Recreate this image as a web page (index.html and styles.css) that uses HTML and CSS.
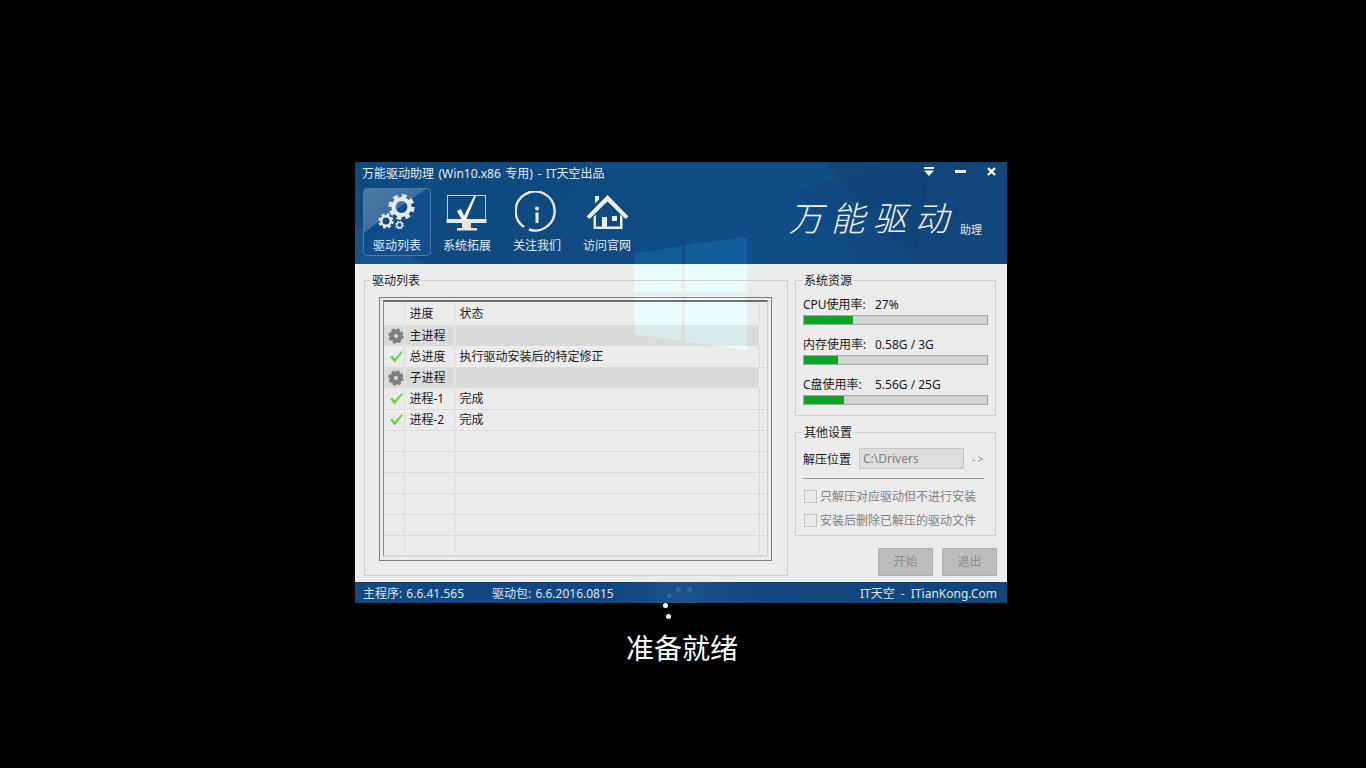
FILE: index.html
```html
<!DOCTYPE html>
<html lang="zh-CN">
<head>
  <meta charset="UTF-8" />
  <title>万能驱动助理</title>
  <link rel="stylesheet" href="styles.css">
</head>
<body>
  <svg class="defs" width="0" height="0">
    <defs>
      <symbol id="gear" viewBox="0 0 32 32">
        <circle cx="16" cy="16" r="9.5" fill="none" stroke="currentColor" stroke-width="5"/>
        <circle cx="16" cy="16" r="12.5" fill="none" stroke="currentColor" stroke-width="6" stroke-dasharray="5.3 4.52"/>
      </symbol>
      <symbol id="gear-solid" viewBox="0 0 32 32">
        <circle cx="16" cy="16" r="8.5" fill="none" stroke="currentColor" stroke-width="9"/>
        <circle cx="16" cy="16" r="12.5" fill="none" stroke="currentColor" stroke-width="6" stroke-dasharray="5.3 4.52"/>
      </symbol>
      <symbol id="tick" viewBox="0 0 16 14">
        <path d="M1 7.5 L3.4 6 L6.2 9 L13.6 1 L15 2.2 L6.6 13 L5.4 13 Z" fill="#7bcf4a"/>
      </symbol>
    </defs>
  </svg>

  <div class="window">
    <div class="header">
      <svg class="shards" width="652" height="102">
        <polygon points="0,0 240,0 150,102 0,102" fill="#0e4a80"/>
        <polygon points="230,0 470,0 560,102 360,102" fill="#15538c" opacity=".45"/>
        <polygon points="470,0 652,0 652,102 560,102" fill="#10467c"/>
        <polygon points="530,0 575,0 560,102 505,102 440,30" fill="#0d4274" opacity=".3"/>
        <polygon points="0,62 70,102 0,102" fill="#1a5c97" opacity=".6"/>
      </svg>
    </div>
    <div class="content"></div>
    <svg class="win-logo" width="652" height="441">
      <polygon class="pane-top" points="279,91 327,84 327,102 279,102"/>
      <polygon class="pane-top" points="330,83 392,75 392,102 330,102"/>
      <polygon class="pane" points="279,102 327,102 327,130 279,130"/>
      <polygon class="pane" points="330,102 392,102 392,130 330,130"/>
      <polygon class="pane" points="279,134 327,134 327,179 279,172"/>
      <polygon class="pane" points="330,134 392,134 392,188 330,180"/>
    </svg>

    <div class="layer">
      <div class="titlebar">
        <span class="title">万能驱动助理 (Win10.x86 专用) - IT天空出品</span>
        <div class="win-btns">
          <svg width="10" height="9" viewBox="0 0 10 9"><rect width="10" height="2" fill="#fff"/><path d="M0 3.5 H10 L5 9 Z" fill="#fff"/></svg>
          <svg width="11" height="3" viewBox="0 0 11 3"><rect width="11" height="3" fill="#fff"/></svg>
          <svg width="9" height="9" viewBox="0 0 9 9"><path d="M1 1 L8 8 M8 1 L1 8" stroke="#fff" stroke-width="2.4"/></svg>
        </div>
      </div>

      <div class="toolbar">
        <div class="tabs">
          <div class="tab active">
            <svg class="tab-icon" width="54" height="44" viewBox="0 0 54 44">
              <use href="#gear" x="18" y="2.5" width="27" height="27"/>
              <use href="#gear" x="8" y="22" width="16" height="16"/>
              <use href="#gear" x="25" y="29.5" width="9" height="9"/>
            </svg>
            <span>驱动列表</span>
          </div>
          <div class="tab">
            <svg class="tab-icon" width="44" height="44" viewBox="0 0 44 44">
              <rect x="2.5" y="4.5" width="38" height="24" fill="none" stroke="#c4d0dc" stroke-width="1"/>
              <rect x="1.5" y="28" width="40" height="4" fill="#e6e6e6"/>
              <rect x="17" y="32" width="9" height="5" fill="#e6e6e6"/>
              <rect x="12" y="37" width="20" height="2.5" fill="#e6e6e6"/>
              <path d="M12 20 L16 18 L19 25 L29 5 L31 5 L21 29 L17 29 Z" fill="#fff"/>
            </svg>
            <span>系统拓展</span>
          </div>
          <div class="tab">
            <svg class="tab-icon" width="44" height="44" viewBox="0 0 44 44">
              <path d="M9 36 A19.5 19.5 0 1 1 14 38.5" fill="none" stroke="#e8e8e8" stroke-width="2.4"/>
              <circle cx="22" cy="17.5" r="2" fill="#e8e8e8"/>
              <rect x="20.5" y="21.5" width="3" height="10.5" fill="#e8e8e8"/>
            </svg>
            <span>关注我们</span>
          </div>
          <div class="tab">
            <svg class="tab-icon" width="44" height="44" viewBox="0 0 44 44">
              <path d="M1.5 25.5 L22.5 4 L43.5 25.5 L40.5 28 L22.5 10.5 L4.5 28 Z" fill="#eee"/>
              <path d="M10 5 H14 V8.5 L10 12.5 Z" fill="#eee"/>
              <path d="M8.5 26 V38 H37.5 V26 L35 23.5 V35.5 H11 V23.5 Z" fill="#eee"/>
              <rect x="17" y="26" width="5" height="11" fill="#eee"/>
              <rect x="27" y="25" width="5" height="5" fill="#eee"/>
            </svg>
            <span>访问官网</span>
          </div>
        </div>
        <div class="brand">
          <span class="brand-name">万能驱动</span>
          <span class="brand-sub">助理</span>
        </div>
      </div>

      <div class="main">
        <fieldset class="group list-group">
          <legend>驱动列表</legend>
          <div class="frame">
            <div class="frame-inner">
              <table class="list">
                <colgroup><col class="c1"><col class="c2"><col class="c3"><col></colgroup>
                <tr class="head"><td></td><td>进度</td><td>状态</td><td></td></tr>
                <tr class="shade"><td><svg class="gear-ic"><use href="#gear-solid"/></svg></td><td>主进程</td><td></td><td></td></tr>
                <tr><td><svg class="tick-ic"><use href="#tick"/></svg></td><td>总进度</td><td>执行驱动安装后的特定修正</td><td></td></tr>
                <tr class="shade"><td><svg class="gear-ic"><use href="#gear-solid"/></svg></td><td>子进程</td><td></td><td></td></tr>
                <tr><td><svg class="tick-ic"><use href="#tick"/></svg></td><td>进程-1</td><td>完成</td><td></td></tr>
                <tr><td><svg class="tick-ic"><use href="#tick"/></svg></td><td>进程-2</td><td>完成</td><td></td></tr>
                <tr><td></td><td></td><td></td><td></td></tr>
                <tr><td></td><td></td><td></td><td></td></tr>
                <tr><td></td><td></td><td></td><td></td></tr>
                <tr><td></td><td></td><td></td><td></td></tr>
                <tr><td></td><td></td><td></td><td></td></tr>
                <tr><td></td><td></td><td></td><td></td></tr>
              </table>
            </div>
          </div>
        </fieldset>

        <div class="side">
          <fieldset class="group res-group">
            <legend>系统资源</legend>
            <div class="res">
              <div class="res-label"><span>CPU使用率:</span><span>27%</span></div>
              <div class="bar"><div class="fill" style="width:49px"></div></div>
            </div>
            <div class="res">
              <div class="res-label"><span>内存使用率:</span><span>0.58G / 3G</span></div>
              <div class="bar"><div class="fill" style="width:34px"></div></div>
            </div>
            <div class="res">
              <div class="res-label"><span>C盘使用率:</span><span>5.56G / 25G</span></div>
              <div class="bar"><div class="fill" style="width:40px"></div></div>
            </div>
          </fieldset>

          <fieldset class="group set-group">
            <legend>其他设置</legend>
            <div class="path-row">
              <span>解压位置</span>
              <div class="path-input">C:\Drivers</div>
              <span class="path-more">- &gt;</span>
            </div>
            <div class="rule"></div>
            <div class="check"><i></i>只解压对应驱动但不进行安装</div>
            <div class="check"><i></i>安装后删除已解压的驱动文件</div>
          </fieldset>

          <div class="actions">
            <div class="btn">开始</div>
            <div class="btn">退出</div>
          </div>
        </div>
      </div>

      <div class="footer">
        <span class="ver">主程序: 6.6.41.565</span>
        <span class="ver pack">驱动包: 6.6.2016.0815</span>
        <span class="site">IT天空 - ITianKong.Com</span>
      </div>
    </div>

    <i class="dot dim d1"></i>
    <i class="dot dim d2"></i>
    <i class="dot dim d3"></i>
    <i class="dot d4"></i>
    <i class="dot d5"></i>
  </div>

  <div class="status">准备就绪</div>
</body>
</html>
```

FILE: styles.css
```css
html, body {
  margin: 0;
  padding: 0;
  height: 100%;
}
body {
  background-color: #000;
  font-family: "Noto Sans", "Noto Sans CJK SC", sans-serif;
  font-size: 12px;
  color: #1a1a1a;
  overflow: hidden;
  padding-top: 162px;
  padding-left: 355px;
  box-sizing: border-box;
}
.defs {
  position: absolute;
}
.window {
  position: relative;
  width: 652px;
  height: 441px;
  background-color: #ececec;
}
.header {
  height: 102px;
  background-color: #0f4a80;
}
.shards {
  display: block;
}
.win-logo {
  position: absolute;
  left: 0;
  top: 0;
}
.pane-top {
  fill: #1a7fbf;
  fill-opacity: .35;
}
.pane {
  fill: #eaffff;
  fill-opacity: .85;
}
.layer {
  position: absolute;
  left: 0;
  top: 0;
  width: 652px;
  height: 441px;
  display: flex;
  flex-direction: column;
}

/* title bar */
.titlebar {
  height: 22px;
  display: flex;
  align-items: center;
  justify-content: space-between;
  padding: 0 11px 0 7px;
}
.title {
  color: #e6edf3;
  line-height: 22px;
  word-spacing: 1.4px;
  margin-top: 2px;
}
.win-btns {
  display: flex;
  align-items: center;
  gap: 21px;
  margin-top: -3px;
}

/* toolbar */
.toolbar {
  height: 80px;
  display: flex;
  justify-content: space-between;
}
.tabs {
  display: flex;
  padding: 4px 0 0 8px;
  gap: 2px;
}
.tab {
  width: 68px;
  height: 68px;
  box-sizing: border-box;
  display: flex;
  flex-direction: column;
  align-items: center;
  color: #e6ecf2;
  border: 1px solid transparent;
  border-radius: 4px;
  padding-top: 2px;
}
.tab.active {
  background: linear-gradient(145deg, #4a7aa6 0%, #3f6f9f 38%, #0f4d8a 39%, #12508c 100%);
  border-color: #4b7aa6;
}
.tab-icon {
  height: 44px;
  color: #e8e8e8;
}
.tab span {
  margin-top: 3px;
  line-height: 16px;
}
.brand {
  display: flex;
  align-items: flex-end;
  padding: 0 25px 26px 0;
}
.brand-name {
  font-size: 34px;
  line-height: 40px;
  letter-spacing: 8px;
  color: #f4f4f4;
  font-weight: 300;
  transform: skewX(-14deg);
}
.brand-sub {
  font-size: 11px;
  line-height: 16px;
  color: #e6e6e6;
}

/* main area */
.main {
  flex: 1;
  display: flex;
  padding: 0 10px 6px 9px;
  gap: 7px;
}
.group {
  margin: 0;
  border: 1px solid #cfcfcf;
  min-width: 0;
  box-sizing: border-box;
}
.group legend {
  padding: 0 2px;
  margin-left: -1px;
  line-height: 17px;
}
.list-group {
  width: 424px;
  height: 304px;
  margin-top: 8px;
  padding: 8px 15px 0 14px;
}
.list-group legend {
  margin-left: -9px;
}
.frame {
  height: 264px;
  box-sizing: border-box;
  border: 1px solid #7d7d7d;
  padding: 2px 3px 4px 3px;
}
.frame-inner {
  height: 100%;
  box-sizing: border-box;
  border-top: 2px solid #6f6f6f;
  border-left: 1px solid #8a8a8a;
  border-right: 1px solid #cfcfcf;
  border-bottom: 1px solid #cfcfcf;
}
.list {
  width: 100%;
  table-layout: fixed;
  border-collapse: collapse;
}
.c1 { width: 20px; }
.c2 { width: 50px; }
.c3 { width: 305px; }
.list td {
  height: 21px;
  padding: 1px 0 0 5px;
  box-sizing: border-box;
  border: 1px solid #dcdcdc;
  border-top: none;
  line-height: 16px;
  white-space: nowrap;
  overflow: hidden;
}
.list tr td:first-child {
  border-left: none;
  padding: 0;
}
.list tr td:last-child {
  border-right: none;
}
.list .head td {
  height: 23px;
  padding-top: 0;
  border-bottom: none;
}
.list .shade td {
  padding-top: 0;
  background-color: rgba(0, 0, 0, .07);
  border-bottom: none;
  border-right-color: transparent;
}
.list .shade td:last-child {
  background-color: transparent;
}
.gear-ic {
  display: block;
  width: 16px;
  height: 16px;
  margin-left: 4px;
  color: #7f7f7f;
}
.tick-ic {
  display: block;
  width: 15px;
  height: 13px;
  margin: 0 0 0 5px;
}

/* right column */
.side {
  width: 201px;
  display: flex;
  flex-direction: column;
}
.res-group {
  height: 144px;
  padding: 7px 7px 0 7px;
  margin-top: 8px;
}
.res {
  height: 40px;
}
.res-label {
  height: 17px;
  line-height: 17px;
  display: flex;
}
.res-label span:first-child {
  width: 72px;
}
.bar {
  margin-top: 2px;
  width: 185px;
  height: 10px;
  box-sizing: border-box;
  border: 1px solid #a8a8a8;
  background-color: #d3d3d3;
}
.fill {
  height: 100%;
  background-color: #0aa528;
}
.set-group {
  height: 112px;
  margin-top: 8px;
  padding: 7px 11px 0 7px;
}
.path-row {
  display: flex;
  align-items: center;
  height: 21px;
}
.path-row span:first-child {
  width: 56px;
}
.path-input {
  width: 105px;
  height: 21px;
  box-sizing: border-box;
  border: 1px solid #c4c4c4;
  background-color: #dedede;
  color: #808080;
  line-height: 19px;
  padding-left: 3px;
}
.path-more {
  margin-left: 8px;
  color: #8a8a8a;
  font-size: 10px;
}
.rule {
  height: 1px;
  background-color: #999;
  margin: 9px 0 0 0;
}
.check {
  display: flex;
  align-items: center;
  gap: 3px;
  height: 14px;
  margin-top: 10px;
  color: #808080;
}
.check i {
  display: block;
  width: 13px;
  height: 13px;
  margin-left: 1px;
  box-sizing: border-box;
  border: 1px solid #c4c4c4;
  background-color: #ececec;
}
.actions {
  display: flex;
  justify-content: flex-end;
  gap: 9px;
  margin: 12px -1px 0 0;
}
.btn {
  width: 55px;
  height: 28px;
  box-sizing: border-box;
  border: 1px solid #adadad;
  background-color: #bdbdbd;
  color: #8c8c8c;
  text-align: center;
  line-height: 26px;
}

/* footer */
.footer {
  height: 21px;
  display: flex;
  align-items: center;
  padding: 0 10px 0 8px;
  background: linear-gradient(90deg, #12477f 0%, #12477f 40%, #1a5189 50%, #12477f 62%, #114579 100%);
  color: #dce6ef;
  word-spacing: 1px;
}
.pack {
  margin-left: 28px;
}
.site {
  margin-left: auto;
  word-spacing: 3px;
}

/* spinner */
.dot {
  position: absolute;
  width: 5px;
  height: 5px;
  border-radius: 50%;
  background-color: #fff;
}
.dot.dim {
  background-color: #2f699f;
}
.d1 { left: 321px; top: 425px; }
.d2 { left: 332px; top: 425px; }
.d3 { left: 312px; top: 431px; }
.d4 { left: 308px; top: 441px; }
.d5 { left: 311px; top: 452px; }

.status {
  width: 652px;
  margin: 26px 0 0 0;
  padding-left: 271px;
  box-sizing: border-box;
  font-size: 28px;
  line-height: 38px;
  color: #fff;
}
```
